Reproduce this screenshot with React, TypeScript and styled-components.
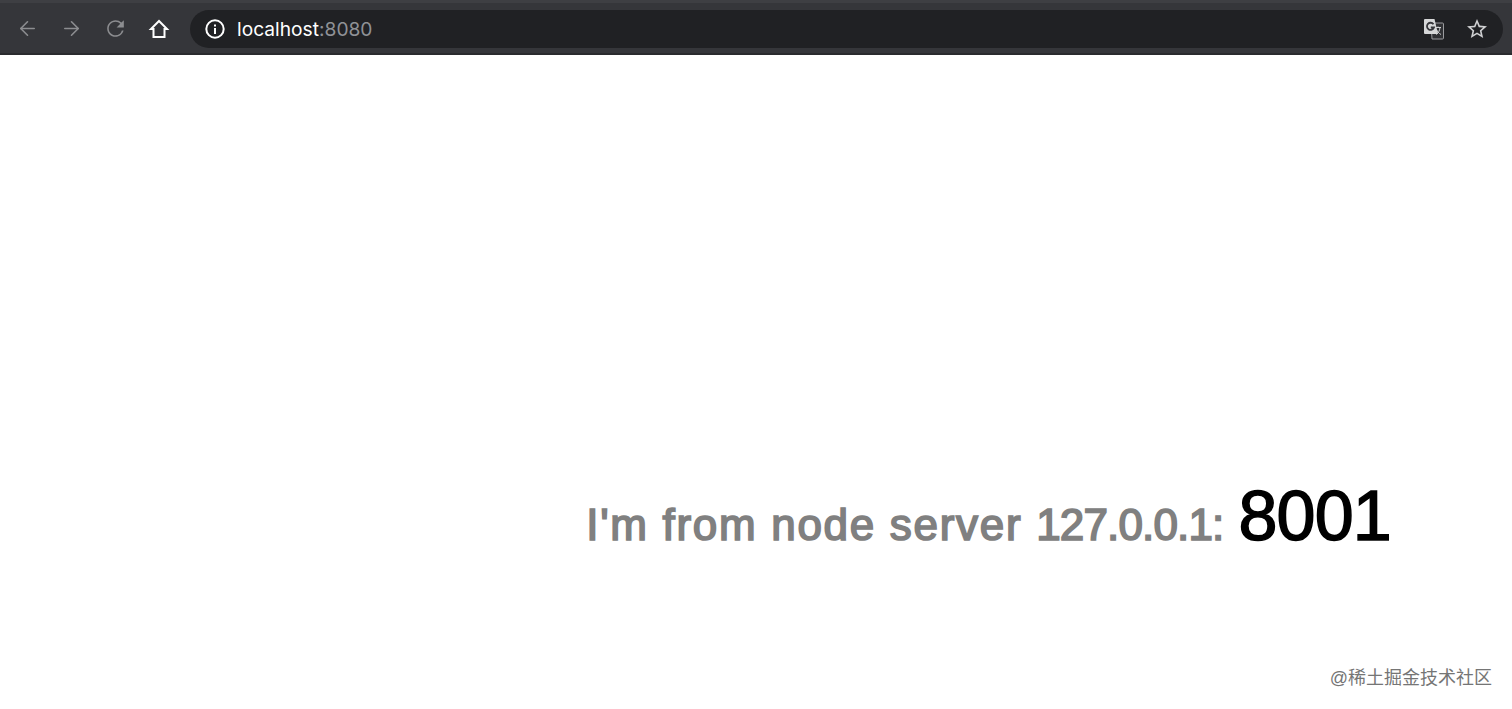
import React from "react";
import styled, { createGlobalStyle } from "styled-components";
import { ArrowLeft, ArrowRight } from "lucide-react";

const GlobalStyle = createGlobalStyle`
  html, body {
    margin: 0;
    padding: 0;
    height: 100%;
    background: #fff;
    font-family: "Liberation Sans", Arial, sans-serif;
  }
  #root {
    height: 100%;
  }
`;

const Page = styled.div`
  position: relative;
  display: flex;
  flex-direction: column;
  width: 1512px;
  height: 709px;
  overflow: hidden;
`;

const Toolbar = styled.header`
  display: flex;
  align-items: center;
  height: 55px;
  box-sizing: border-box;
  padding: 1px 9px 0 5px;
  background: #35363a;
  border-top: 3px solid #3e3f43;
  border-bottom: 2px solid #2a2b2e;
  flex-shrink: 0;
`;

const NavButton = styled.div<{ $color: string }>`
  display: flex;
  align-items: center;
  justify-content: center;
  width: 44px;
  height: 38px;
  color: ${(p) => p.$color};
`;

const UrlBar = styled.div`
  flex: 1;
  display: flex;
  align-items: center;
  height: 38px;
  margin-left: 9px;
  padding: 0 14px 0 14px;
  border-radius: 19px;
  background: #202124;
`;

const InfoIcon = styled.svg`
  display: block;
  color: #fff;
`;

const Address = styled.div`
  flex: 1;
  margin-left: 11px;
  font-family: Inter, "Liberation Sans", sans-serif;
  font-size: 19.2px;
  color: #fff;
`;

const Port = styled.span`
  color: #8f9196;
`;

const RightIcons = styled.div`
  display: flex;
  align-items: center;
  gap: 20px;
  color: #cfd0d2;
`;

const Content = styled.main`
  flex: 1;
  display: flex;
  justify-content: flex-end;
  align-items: baseline;
  padding: 421px 121px 0 0;
`;

const Message = styled.span`
  font-size: 44px;
  color: #808080;
  letter-spacing: 1.7px;
  -webkit-text-stroke: 1.7px #808080;
`;

const Host = styled.span`
  letter-spacing: -0.85px;
`;

const Accent = styled.span`
  margin-left: 15px;
  font-size: 70px;
  color: #000;
  letter-spacing: -0.8px;
  -webkit-text-stroke: 1.5px #000;
`;

const Watermark = styled.div`
  position: absolute;
  right: 20px;
  bottom: 20px;
  font-family: "Liberation Sans", "Noto Sans CJK SC", sans-serif;
  font-size: 18px;
  color: #757575;
`;

function ReloadIcon() {
  return (
    <svg width="25" height="25" viewBox="0 0 24 24" fill="currentColor">
      <path d="M17.65 6.35A7.95 7.95 0 0 0 12 4C7.58 4 4.01 7.58 4.01 12S7.58 20 12 20c3.73 0 6.84-2.55 7.73-6h-1.6A6.500 6.500 0 0 1 12 18.500c-3.590 0-6.500-2.910-6.500-6.500s2.910-6.500 6.500-6.500c1.800 0 3.400.75 4.600 1.900L13 11h7V4l-2.350 2.350z" />
    </svg>
  );
}

function HomeIcon() {
  return (
    <svg width="22" height="22" viewBox="0 0 22 22" fill="none" stroke="currentColor" strokeWidth="2" strokeLinejoin="miter">
      <path d="M11 3 3 11h2.500v8h11v-8H19z" />
    </svg>
  );
}

function SiteInfoIcon() {
  return (
    <InfoIcon width="22" height="22" viewBox="0 0 22 22">
      <circle cx="11" cy="11" r="8.700" fill="none" stroke="currentColor" strokeWidth="2" />
      <rect x="10" y="10" width="2" height="6" fill="currentColor" />
      <rect x="10" y="6.500" width="2" height="2" fill="currentColor" />
    </InfoIcon>
  );
}

function TranslateIcon() {
  return (
    <svg width="22" height="22" viewBox="0 0 22 22">
      <path d="M8 5h11.500a1 1 0 0 1 1 1v14a1 1 0 0 1-1 1H9z" fill="#303134" stroke="#9a9b9e" />
      <path d="M12 9.500h6M15 8.500v1M13 16.500c2.500-1.500 3.600-3.700 4-7M13.500 11.500c.8 2 2.200 3.700 4.500 5" fill="none" stroke="#d0d1d3" strokeWidth="1" />
      <path d="M2 1h9.500l3.500 15H2a1 1 0 0 1-1-1V2a1 1 0 0 1 1-1z" fill="#d6d7d8" />
      <path d="M10.500 6.200A3.600 3.600 0 1 0 11 9.500H7.800" fill="none" stroke="#35363a" strokeWidth="1.800" />
    </svg>
  );
}

function StarIcon() {
  return (
    <svg width="24" height="24" viewBox="0 0 24 24" fill="currentColor">
      <path d="M22 9.240l-7.190-.62L12 2 9.190 8.630 2 9.240l5.460 4.730L5.820 21 12 17.270 18.180 21l-1.630-7.030L22 9.240zM12 15.400l-3.760 2.270 1-4.280-3.320-2.880 4.380-.38L12 6.100l1.710 4.040 4.380.38-3.320 2.880 1 4.280L12 15.400z" />
    </svg>
  );
}

export default function App() {
  return (
    <Page>
      <GlobalStyle />
      <Toolbar>
        <NavButton $color="#8c8d90">
          <ArrowLeft size={23} strokeWidth={1.7} />
        </NavButton>
        <NavButton $color="#8c8d90">
          <ArrowRight size={23} strokeWidth={1.7} />
        </NavButton>
        <NavButton $color="#8c8d90">
          <ReloadIcon />
        </NavButton>
        <NavButton $color="#ffffff">
          <HomeIcon />
        </NavButton>
        <UrlBar>
          <SiteInfoIcon />
          <Address>
            localhost<Port>:8080</Port>
          </Address>
          <RightIcons>
            <TranslateIcon />
            <StarIcon />
          </RightIcons>
        </UrlBar>
      </Toolbar>
      <Content>
        <Message>
          I'm from node server <Host>127.0.0.1:</Host>
        </Message>
        <Accent>8001</Accent>
      </Content>
      <Watermark>@稀土掘金技术社区</Watermark>
    </Page>
  );
}
